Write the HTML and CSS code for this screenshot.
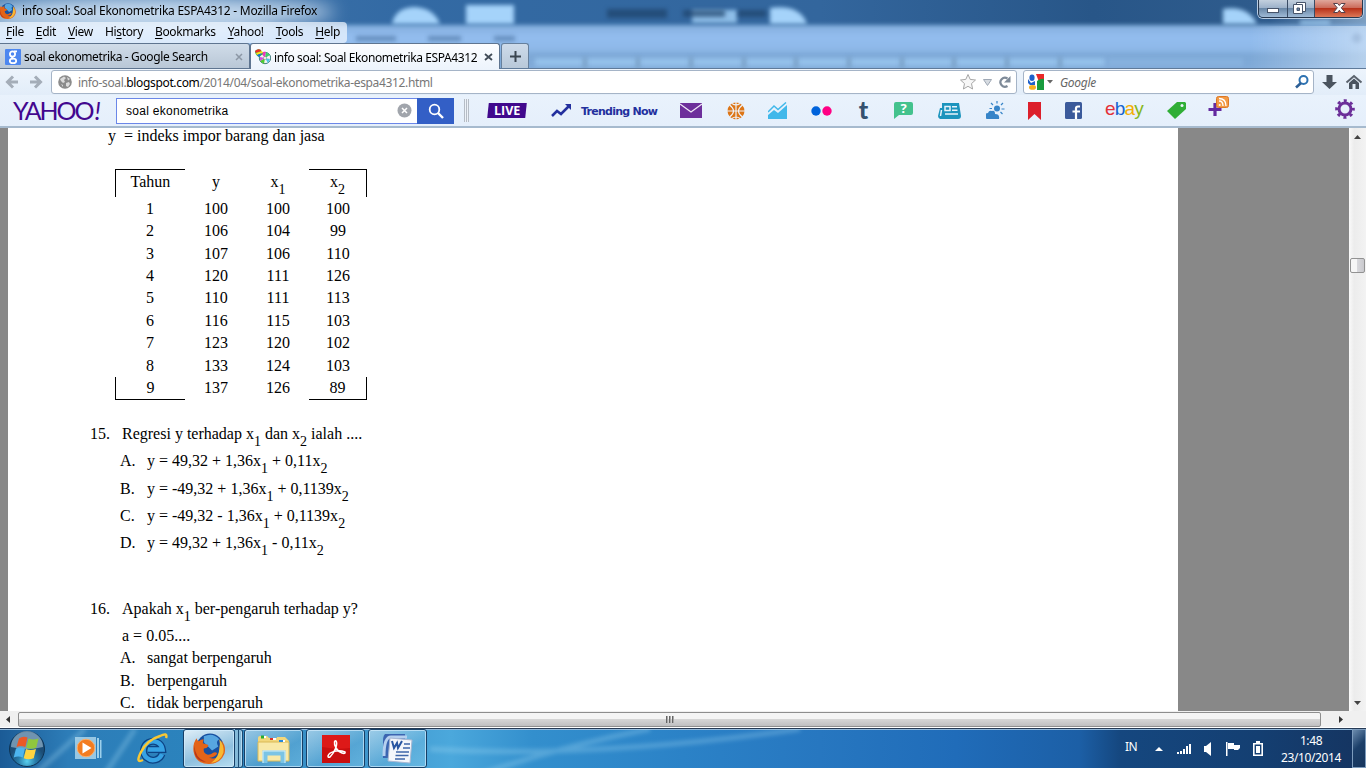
FILE: index.html
```html
<!DOCTYPE html>
<html lang="id">
<head>
<meta charset="utf-8">
<title>info soal: Soal Ekonometrika ESPA4312 - Mozilla Firefox</title>
<link rel="stylesheet" href="styles.css">
</head>
<body>
<header class="glass">
  <svg class="aero" width="1366" height="69" viewBox="0 0 1366 69" preserveAspectRatio="none">
    <defs>
      <linearGradient id="top"><stop offset="0" stop-color="#4378ad"/><stop offset=".3" stop-color="#336aa4"/><stop offset=".6" stop-color="#33669d"/><stop offset=".8" stop-color="#285688"/><stop offset=".93" stop-color="#2f5c8d"/><stop offset="1" stop-color="#7d9fc2"/></linearGradient>
      <linearGradient id="mid" x2="0" y2="1"><stop offset="0" stop-color="#84aedd"/><stop offset=".2" stop-color="#93bdef"/><stop offset=".4" stop-color="#8eb9e9"/><stop offset=".5" stop-color="#7da8d6"/><stop offset="1" stop-color="#86b0de"/></linearGradient>
      <linearGradient id="haze"><stop offset="0" stop-color="#d5e6f8" stop-opacity="0"/><stop offset="1" stop-color="#d5e6f8" stop-opacity=".65"/></linearGradient>
    </defs>
    <rect width="1366" height="30" fill="url(#top)"/>
    <rect class="soft" x="-20" y="25" width="1410" height="60" fill="url(#mid)"/>
    <g class="soft" fill="#a5d3fa">
      <path d="M392 24q3-16 22-17q20 1 26 17z"/><path d="M466 5h48v19h-48z"/><path d="M770 8q30-4 37 16h-37z"/><path d="M692 10h45v13h-45z" opacity=".8"/><path d="M1223 9q25-4 34 15h-34z"/>
      <path d="M1300 20h30v5h-30z" opacity=".7"/>
      <path d="M535 58h570v8H535z" opacity=".55"/>
      <path d="M1108 58h135v8h-135z" opacity=".2"/>
    </g>
    <g class="soft">
      <path fill="#7196bd" opacity=".8" d="M583 57h4v11h-4zM636 57h4v11h-4zM689 57h4v11h-4zM742 57h4v11h-4zM794 57h4v11h-4zM847 57h4v11h-4zM900 57h4v11h-4zM952 57h4v11h-4zM1005 57h4v11h-4zM1058 57h4v11h-4z"/>
      <path fill="#476f9f" opacity=".6" d="M356 36h40v5h-40zM428 36h33v5h-33zM494 36h21v5h-21z"/>
      <path fill="#1e436b" opacity=".7" d="M607 9h60v9h-60zM683 10h42v7h-42zM738 10h28v7h-28z"/>
      <circle cx="1357" cy="38" r="5" fill="#5c86bb"/>
    </g>
    <g class="glow" fill="#e8f4ff"><ellipse cx="160" cy="12" rx="175" ry="15" opacity=".8"/><ellipse cx="60" cy="32" rx="220" ry="14" opacity=".4"/></g>
    <rect x="1250" y="26" width="116" height="43" fill="url(#haze)"/>
  </svg>
  <div class="titlebar">
    <svg class="fx16" width="17" height="18" viewBox="0 0 32 32"><use href="#firefox"/></svg>
    <span class="win-title">info soal: Soal Ekonometrika ESPA4312 - Mozilla Firefox</span>
    <div class="winbtns">
      <span class="wb min"><svg width="28" height="18"><rect x="8.500" y="8.500" width="11" height="4" fill="#fff" stroke="#47546a"/></svg></span>
      <span class="wb max"><svg width="26" height="18" fill="#fff" stroke="#47546a"><path d="M8.500 2.500h9v9h-9z"/><path d="M5.500 4.500h9v9h-9z"/><path d="M9 8h2.500v2.500H9z" fill="#6c87a9"/></svg></span>
      <span class="wb close"><svg width="47" height="18"><path d="M18.500 3.500h4l1.800 2 1.800-2h4l-3.800 4.300 3.800 4.700h-4l-1.800-2.200-1.800 2.200h-4l3.800-4.700z" fill="#fff" stroke="#54414b"/></svg></span>
    </div>
  </div>
  <nav class="menubar"><span><u>F</u>ile</span><span><u>E</u>dit</span><span><u>V</u>iew</span><span>Hi<u>s</u>tory</span><span><u>B</u>ookmarks</span><span><u>Y</u>ahoo!</span><span><u>T</u>ools</span><span><u>H</u>elp</span></nav>
  <div class="tabs">
    <div class="tab">
      <svg width="16" height="16"><rect width="16" height="16" rx="1" fill="#4d87f0"/><g fill="none" stroke="#fff" stroke-width="1.800"><circle cx="7.500" cy="5" r="2.600"/><path d="M9 2.400h3M8 7.500q-2 1.500 0 2.200"/><ellipse cx="8" cy="11.900" rx="3.200" ry="2.200"/></g></svg>
      <span class="t1">soal ekonometrika - Google Search</span>
      <svg class="x" width="8" height="8"><path d="M1 1l6 6M7 1L1 7" stroke="#8c97a5" stroke-width="1.500"/></svg>
    </div>
    <div class="tab on">
      <svg width="16" height="16"><circle cx="10" cy="9" r="5.700" fill="#f2f2f2" stroke="#447f80"/><path d="M10 9L6 4a6 6 0 0 1 5-1z" fill="#ed38be"/><path d="M10 9l1-6 4 3z" fill="#3bd16a"/><path d="M10 9l5 1-2 4z" fill="#4bc6e6"/><path d="M10 9l-1 6-4-3z" fill="#4fca2e"/><path d="M10 9l-5 3V8z" fill="#d14fe0"/><path d="M0 2q3-3 6-1l2 4-4 3q-4-2-4-6z" fill="#2fb44a"/><path d="M0 2q3-3 6-1l0 1-5 2z" fill="#ed2f25"/><path d="M1 4l6-2 1 2-6 2z" fill="#fbe21c"/><path d="M2 6l5-2-3 4z" fill="#1970e0"/><circle cx="10" cy="9" r="1.500" fill="#fff" stroke="#777" stroke-width=".5"/></svg>
      <span class="t2">info soal: Soal Ekonometrika ESPA4312</span>
      <svg class="x" width="9" height="8"><path d="M1 1l7 6M8 1L1 7" stroke="#414b57" stroke-width="1.800"/></svg>
    </div>
    <div class="newtab"><svg width="11" height="11"><path d="M5.500 0v11M0 5.500h11" stroke="#3a4550" stroke-width="2"/></svg></div>
  </div>
</header>

<div class="navbar">
  <svg class="arrows" width="51" height="24" fill="none" stroke="#a4adb8" stroke-width="3"><path d="M18 12H9M13 6.500L7.500 12l5.500 5.500M30 12h9M35 6.500l5.500 5.500-5.500 5.500"/></svg>
  <div class="urlbar">
    <svg width="14" height="14"><circle cx="7" cy="7" r="6.800" fill="#8b8b8b"/><path d="M2 4l4-2.500 2 1.500-2 2 1 2-2 1-2-2zM8 8l3-1 1 2-2 3-2-1zM9 2l3 2-2 1.500zM3 9l2 1v2z" fill="#dcdcdc"/></svg>
    <span class="url">info-soal.<b>blogspot.com</b>/2014/04/soal-ekonometrika-espa4312.html</span>
    <svg class="urlicons" width="54" height="20"><path d="M9 2.500l2.200 4.900 5.300.6-4 3.600 1.100 5.400L9 14.300 4.400 17l1.100-5.400-4-3.600 5.300-.6z" fill="#f7f7f7" stroke="#a6a6a6"/><path d="M24.500 7.500h8l-4 6z" fill="#d6dbe1" stroke="#a0a9b5"/><path d="M48.500 14a4.500 4.500 0 1 1 0-7.500" fill="none" stroke="#7e8a98" stroke-width="2.200"/><path d="M51.500 4v6.500H45z" fill="#7e8a98"/></svg>
  </div>
  <div class="searchbar">
    <svg width="16" height="16"><path d="M8 0h8v7l-5 1z" fill="#ea2828"/><path d="M9 7q4-3 7-2v11H9z" fill="#189b3d"/><path d="M0 9l7 1v6H0z" fill="#fff"/><ellipse cx="4" cy="3.800" rx="2.600" ry="3.300" fill="#1e60ca"/><path d="M0 5l3 4 4-2v4H2L0 9z" fill="#1e60ca"/><ellipse cx="4.500" cy="13.400" rx="3.500" ry="2.300" fill="#f4b021"/></svg>
    <svg class="caret" width="6" height="4"><path d="M0 0h6L3 3.500z" fill="#666"/></svg>
    <i>Google</i>
    <svg class="mag" width="14" height="14"><circle cx="8.500" cy="5" r="4" fill="none" stroke="#2d72b1" stroke-width="2"/><path d="M6 8l-5 4.500" stroke="#2d5f96" stroke-width="2.600"/></svg>
  </div>
  <svg class="navicons" width="52" height="24"><path d="M12.500 5h6v7h4.500L15.500 19 8 12h4.500z" fill="#4b545f"/><path d="M32.500 12.500L40 6l7.500 6.500" fill="none" stroke="#5b636d" stroke-width="2"/><path d="M35 13l5-4.500 5 4.500v6h-3.500V14h-3v5H35z" fill="#4b545f"/></svg>
</div>

<div class="yahoobar">
  <span class="ylogo">YAHOO<em>!</em></span>
  <div class="ysearch"><span>soal ekonometrika</span><svg width="15" height="15"><circle cx="7.500" cy="7.500" r="7" fill="#a1a5ac"/><path d="M5 5l5 5M10 5l-5 5" stroke="#fff" stroke-width="1.500"/></svg></div>
  <div class="ybtn"><svg width="16" height="16"><circle cx="6.500" cy="6.500" r="4.800" fill="none" stroke="#fff" stroke-width="1.800"/><path d="M10 10l5 5" stroke="#fff" stroke-width="2.400"/></svg></div>
  <div class="grip"></div>
  <div class="live"><span>LIVE</span></div>
  <svg class="ic-trend" width="21" height="15"><path d="M1 13l5-5 4 3 8-8" fill="none" stroke="#23309e" stroke-width="2.500"/><path d="M14 1h6v6z" fill="#23309e"/></svg>
  <b class="trend">Trending Now</b>
  <svg class="ic-mail" width="22" height="15"><path d="M0 0h22v15H0z" fill="#6d2f9b"/><path d="M0 1l11 8 11-8" fill="none" stroke="#f2eaf8" stroke-width="1.200"/></svg>
  <svg class="ic-ball" width="18" height="18"><circle cx="9" cy="9" r="8.500" fill="#dd7516"/><path d="M0 9h18M9 0v18M2.500 3q4 3 4 6t-4 6M15.500 3q-4 3-4 6t4 6M5 1.500q4 3 8 0M5 16.500q4-3 8 0" fill="none" stroke="#edf4fc" stroke-width="1.200"/></svg>
  <svg class="ic-chart" width="20" height="17"><path d="M0 17v-4l6-5 4 3 9-8v14z" fill="#41b8ea"/><path d="M0 10l6-6 4 3.500 8-7" fill="none" stroke="#41b8ea" stroke-width="1.500"/></svg>
  <svg class="ic-flickr" width="22" height="10"><circle cx="5" cy="5" r="4.700" fill="#0063db"/><circle cx="16" cy="5" r="4.700" fill="#ff0084"/></svg>
  <b class="ic-t">t</b>
  <div class="ic-q"><svg width="19" height="17"><path d="M2 0h15q2 0 2 2v9q0 2-2 2H5l-5 4V2q0-2 2-2z" fill="#43c28d"/></svg><b>?</b></div>
  <svg class="ic-news" width="24" height="16"><path d="M4 0h17l2 13q0 3-3 3H2q-2-1-2-3l2-8h2z" fill="#1c94bd"/><path d="M7 3.500h5v4H7zM14 3.700h5M14 7.300h5.500M7 11h13M3.500 7l-1 6" fill="none" stroke="#e9f3fb" stroke-width="1.500"/></svg>
  <svg class="ic-weather" width="19" height="19"><path d="M2 18a3 3 0 0 1 0-6q1-3 4-2 3-1 3 3 5 0 4 5z" fill="#3684c8"/><circle cx="11" cy="7.500" r="3" fill="#3684c8"/><path d="M11 0v2.500M5 2l2 2M17 2l-2 2M15.500 8H18.500M14.500 11l2 2M3.500 7.500H6" stroke="#3684c8" stroke-width="1.200"/></svg>
  <svg class="ic-book" width="13" height="18"><path d="M0 0h13v18l-6.500-6L0 18z" fill="#dc1f2b"/></svg>
  <svg class="ic-fb" width="17" height="17"><rect width="17" height="17" rx="1.500" fill="#3b5a9b"/><path d="M15 4.500h-2q-2 0-2 2V17M7.500 9.500H15" fill="none" stroke="#fff" stroke-width="2.200"/></svg>
  <span class="ebay"><i class="e">e</i><i class="b">b</i><i class="a">a</i><i class="y">y</i></span>
  <svg class="ic-tag" width="19" height="17"><path d="M10 0h8l1 1v6L8 17 0 9z" fill="#30ae36"/><circle cx="15" cy="3.500" r="1.500" fill="#eaf4fa"/></svg>
  <svg class="ic-plus" width="21" height="21"><path d="M7 7v13M.5 13.500h13" stroke="#632aa0" stroke-width="3.200"/><rect x="8.500" y=".5" width="12" height="11" rx="2" fill="#f39a45" stroke="#dd7825"/><path d="M11 5q4 0 4 5M11 2.500q7 0 7 7.500" fill="none" stroke="#fff" stroke-width="1.300"/><circle cx="11.700" cy="9" r="1" fill="#fff"/></svg>
  <svg class="ic-gear" width="20" height="20"><circle cx="10" cy="10" r="8.300" fill="none" stroke="#6c2f99" stroke-width="3" stroke-dasharray="3 3.520" stroke-dashoffset="1.500"/><circle cx="10" cy="10" r="6" fill="none" stroke="#6c2f99" stroke-width="3"/></svg>
</div>

<main class="viewport">
  <article class="doc">
    <p class="intro">y&nbsp; = indeks impor barang dan jasa</p>
    <div class="tbl">
      <div class="row head"><span>Tahun</span><span>y</span><span>x<sub>1</sub></span><span>x<sub>2</sub></span></div>
      <div class="row"><span>1</span><span>100</span><span>100</span><span>100</span></div>
      <div class="row"><span>2</span><span>106</span><span>104</span><span>99</span></div>
      <div class="row"><span>3</span><span>107</span><span>106</span><span>110</span></div>
      <div class="row"><span>4</span><span>120</span><span>111</span><span>126</span></div>
      <div class="row"><span>5</span><span>110</span><span>111</span><span>113</span></div>
      <div class="row"><span>6</span><span>116</span><span>115</span><span>103</span></div>
      <div class="row"><span>7</span><span>123</span><span>120</span><span>102</span></div>
      <div class="row"><span>8</span><span>133</span><span>124</span><span>103</span></div>
      <div class="row foot"><span>9</span><span>137</span><span>126</span><span>89</span></div>
    </div>
    <section class="q q15">
      <p class="sub"><span class="n">15.</span>Regresi y terhadap x<sub>1</sub> dan x<sub>2</sub> ialah ....</p>
      <p class="sub o"><span>A.</span>y = 49,32 + 1,36x<sub>1</sub> + 0,11x<sub>2</sub></p>
      <p class="sub o"><span>B.</span>y = -49,32 + 1,36x<sub>1</sub> + 0,1139x<sub>2</sub></p>
      <p class="sub o"><span>C.</span>y = -49,32 - 1,36x<sub>1</sub> + 0,1139x<sub>2</sub></p>
      <p class="sub o"><span>D.</span>y = 49,32 + 1,36x<sub>1</sub> - 0,11x<sub>2</sub></p>
    </section>
    <section class="q q16">
      <p class="sub"><span class="n">16.</span>Apakah x<sub>1</sub> ber-pengaruh terhadap y?</p>
      <p class="alpha">a = 0.05....</p>
      <p class="o"><span>A.</span>sangat berpengaruh</p>
      <p class="o"><span>B.</span>berpengaruh</p>
      <p class="o"><span>C.</span>tidak berpengaruh</p>
    </section>
  </article>
  <div class="vscroll">
    <svg width="7" height="4"><path d="M3.500 0L7 4H0z" fill="#444"/></svg>
    <div class="vthumb"></div>
    <svg class="down" width="7" height="4"><path d="M0 0h7L3.500 4z" fill="#444"/></svg>
  </div>
</main>
<div class="hscroll">
  <svg width="4" height="7"><path d="M4 0v7L0 3.500z" fill="#333"/></svg>
  <div class="hthumb"><i></i><i></i><i></i></div>
  <svg class="right" width="4" height="7"><path d="M0 0v7l4-3.500z" fill="#333"/></svg>
</div>

<footer class="taskbar">
  <svg class="streaks" width="1366" height="40"><g class="soft" fill="none" stroke="#a8dcf4" stroke-width="5" opacity=".3"><path d="M35 45L85 0M105 45L135 0M480 45Q570 15 650 0M430 20Q590 30 800 0"/></g></svg>
  <svg class="orb" width="38" height="38" viewBox="0 0 38 38"><defs><radialGradient id="o" cy=".85"><stop offset="0" stop-color="#59d0ee"/><stop offset=".5" stop-color="#277ba9"/><stop offset="1" stop-color="#1c4d76"/></radialGradient></defs><circle cx="19" cy="19" r="17.500" fill="url(#o)" stroke="#0d3354"/><path d="M3 17a16 16 0 0 1 32 0q-16 4-32 0z" fill="#c3dbe9" opacity=".5"/><path d="M11 8.500q4-3 8.500-1l-2.200 9.500q-4.500-2-8.800 0z" fill="#ea5927"/><path d="M20.500 8.500q4.500 2 10 0l-2.300 9.300q-5.200 2-10 0z" fill="#8fc73e"/><path d="M8 18.500q4.500-2 9 0l-2.300 9q-4.300-2-9 0z" fill="#4db5ef"/><path d="M18 19q4.500 2 10 0l-2.300 9.300q-5.200 2-10 0z" fill="#fed440"/></svg>
  <svg class="wmp" width="28" height="26"><path d="M0 1h21v22H0z" fill="#b2daee" opacity=".8"/><path d="M22 2h2v20h-2zM25 4h1.500v18H25z" fill="#9dd0eb"/><circle cx="11" cy="12" r="8.800" fill="#f37c20" stroke="#f9ae6c"/><path d="M7.500 6.500v11l9-5.500z" fill="#fff"/></svg>
  <svg class="ie" width="32" height="32" viewBox="0 0 32 32"><path d="M26 21A9.500 9.500 0 1 1 26.500 16.500H12" fill="none" stroke="#0d4384" stroke-width="7"/><path d="M26 21A9.500 9.500 0 1 1 26.500 16.500H12" fill="none" stroke="#36a2e4" stroke-width="4.500"/><path d="M7 27Q-1 31 5 19T24 3q8-4 6 2" fill="none" stroke="#f9c834" stroke-width="2.500"/></svg>
  <div class="tb ff"><svg width="34" height="33" viewBox="0 0 32 32"><g id="firefox"><circle cx="17" cy="14.500" r="13" fill="#174f9f"/><path d="M11 4q9-4 15 3-4 2-1 7l-6 4-8-8z" fill="#57a6e0"/><path d="M4 6q0 2 2 3 2-2 5-2-1 2-1 4l4 1q2 0 1 2-1 2-4 2-1 5 4 6 3 0 5-2 3-1 4 1-3 4-8 4 5 2 9-1 5-4 4-12l-1-4q5 6 3 13-4 10-15 10Q3 31 1 19 0 11 4 6z" fill="#e36418"/><path d="M26 7q5 5 4 13-3 9-12 10 8-6 8-14 1-5 0-9z" fill="#f9b932"/><path d="M2 13q0 12 11 16-13-1-11-16z" fill="#b7371a"/></g></svg></div><div class="stack"></div>
  <div class="tb ex"><svg width="34" height="30"><path d="M1 4q0-2 2-2h7l2 2h8v-1h8l4 4v18H1z" fill="#f2d77b"/><path d="M1 8h31v19H1z" fill="#f8e9a8" stroke="#d9b956"/><path d="M4 3h5M14 5h5M23 7h5" stroke="#fff" stroke-width="2"/><path d="M4 3h3" stroke="#27ad31" stroke-width="3"/><path d="M13 5h3" stroke="#de3426" stroke-width="2"/><path d="M22 7h4" stroke="#2587d9" stroke-width="2"/><path d="M8 29V19h18v10" fill="none" stroke="#7bc4e5" stroke-width="5"/><path d="M6 29V17h22v12" fill="none" stroke="#d3effa"/></svg></div>
  <div class="tb ad"><svg width="28" height="28"><path d="M0 0h28v28H0z" fill="#c90e0f"/><path d="M0 0h28v13q-13 2-28-1z" fill="#dd1918"/><path d="M6 21c1-4 10-7 17-4 1 3-6 1-9-4-3-6-1-8 0-7 2 3-1 11-6 16q-2 1-2-1z" fill="none" stroke="#fff" stroke-width="1.500"/></svg></div>
  <div class="tb wd"><svg width="32" height="30"><path d="M3 0h20v24H1V7q0-5 2-7z" fill="#3b65b1"/><path d="M2 22Q2 3 9 3h16" fill="none" stroke="#b6d0ef" stroke-width="3"/><path d="M8 4l22 2-2 23-22-2z" fill="#f3f6fb" stroke="#a9b8d3"/><path d="M22 10h6M21 14h7M14 18h13M13.500 21.500h13M13 25h10" stroke="#3e66a9" stroke-width="1.700"/><path d="M10 7l2 7 3-5 1 5 4-7" fill="none" stroke="#2855a1" stroke-width="2"/></svg></div>
  <div class="tray">
    <span class="in">IN</span>
    <svg class="up" width="8" height="4"><path d="M0 4l4-4 4 4z" fill="#fff"/></svg>
    <svg class="sig" width="15" height="12" fill="#fff"><path d="M0 9h2v2H0zM3 8h2v3H3zM6 6h2v5H6zM9 3h2v8H9zM12 1h2v10h-2z"/></svg>
    <svg class="spk" width="8" height="14"><path d="M0 4h2l5-4v14l-5-4H0z" fill="#fff"/></svg>
    <svg class="flag" width="15" height="14"><path d="M0 0h1.500v14H0zM2 1h6v2h6v3l-2 2H8V7H2z" fill="#fff"/></svg>
    <svg class="bat" width="10" height="15"><path d="M3 0h4v2H3z" fill="#fff"/><path d="M.8 2.800h8.400v11.400H.8z" fill="none" stroke="#fff" stroke-width="1.600"/><path d="M3 5h4v7H3z" fill="#fff"/></svg>
    <div class="clock"><span>1:48</span><span>23/10/2014</span></div>
    <div class="desk"></div>
  </div>
</footer>
</body>
</html>
```
FILE: styles.css
```css
* { box-sizing: border-box; }
body { margin: 0; width: 1366px; height: 768px; overflow: hidden; display: flex; flex-direction: column; font: 12px "Noto Sans", "Open Sans", sans-serif; color: #000; }
svg { display: block; flex: none; }
span, b { white-space: nowrap; }
p { margin: 0; }
.soft { filter: blur(2.2px); }
.glow { filter: blur(9px); }

/* window frame */
.glass { position: relative; z-index: 0; height: 69px; flex: none; background: #4f82b8; }
.aero { position: absolute; left: 0; top: 0; z-index: -1; }
.titlebar { height: 22px; display: flex; align-items: center; }
.fx16 { margin-left: -1px; margin-top: -1px; }
.win-title { margin-left: 6px; letter-spacing: -0.250px; line-height: 22px; }
.winbtns { margin: 0 3px 0 auto; height: 18px; align-self: flex-start; display: flex; border: 1px solid #27384f; border-top: 0; border-radius: 0 0 5px 5px; overflow: hidden; box-shadow: 0 0 0 1px #b9cde4; }
.wb { background: linear-gradient(#c3d0de, #9db2ca 45%, #6a88a8 50%, #9fbad6); border-right: 1px solid #394c65; }
.wb.close { background: linear-gradient(#e0a79b, #cc6c5b 45%, #b8321a 50%, #dc7858); border-right: 0; }
.menubar { height: 21px; width: 347px; display: flex; padding-left: 6px; gap: 12px; line-height: 20px; letter-spacing: -0.340px; background: rgba(240, 247, 255, .72); border-radius: 0 4px 4px 0; white-space: nowrap; }
.menubar u { text-underline-offset: 2px; }
.tabs { height: 26px; display: flex; border-bottom: 1px solid #5f7a99; }
.tab { width: 250px; height: 26px; padding: 1px 6px 0 5px; display: flex; align-items: center; background: linear-gradient(#d0dce9, #b9c7d6); border: 1px solid #5f7590; border-left: 0; border-radius: 0 3px 0 0; letter-spacing: -0.380px; }
.tab.on { background: linear-gradient(#fcfdff, #edf4fc); border-bottom: 0; border-left: 1px solid #5f7590; border-radius: 3px 3px 0 0; padding-left: 4px; letter-spacing: -0.390px; }
.tab span { margin-left: 3px; }
.tab .x { margin-left: auto; }
.newtab { width: 28px; margin-left: 1px; display: flex; align-items: center; justify-content: center; background: linear-gradient(#cddbea, #b8c8d9); border: 1px solid #66809d; border-bottom: 0; border-radius: 3px 3px 0 0; }

/* navigation toolbar */
.navbar { height: 26px; flex: none; display: flex; align-items: flex-start; background: linear-gradient(#edf4fc, #e2edf9); padding-top: 1px; }
.urlbar { width: 966px; height: 24px; display: flex; align-items: center; padding: 0 3px 0 6px; background: #fff; border: 1px solid #a5b4c7; border-radius: 3px; color: #777; }
.url { margin-left: 6px; letter-spacing: -0.350px; }
.url b { font-weight: 400; color: #000; }
.urlicons { margin-left: auto; }
.searchbar { width: 291px; height: 24px; margin-left: 6px; display: flex; align-items: center; padding: 0 4px 0 4px; background: #fff; border: 1px solid #a5b4c7; border-radius: 3px; color: #666; letter-spacing: -.3px; }
.caret { margin: 0 7px 0 3px; }
.mag { margin-left: auto; }

/* Yahoo toolbar */
.yahoobar { height: 33px; flex: none; display: flex; align-items: center; background: linear-gradient(#e9f2fc, #e5effb); border-bottom: 2px solid #a6bace; }
.ylogo { width: 90px; margin-left: 13px; margin-top: -1px; font: 25px/30px "Lato", sans-serif; letter-spacing: -2.100px; color: #43078f; }
.ylogo em { margin-left: 2px; }
.ysearch { width: 301px; height: 26px; margin-left: 13px; padding: 0 5px 0 9px; display: flex; justify-content: space-between; align-items: center; border: 1px solid #6b87e8; border-right: 0; background: #fff; font: 12px "Liberation Sans", sans-serif; letter-spacing: .3px; }
.ybtn { width: 37px; height: 26px; display: flex; align-items: center; justify-content: center; background: #335fc6; }
.grip { width: 5px; height: 23px; margin-left: 10px; background: repeating-linear-gradient(90deg, #b5bcc5 0 1px, #edf2f8 1px 2px); }
.live { width: 38px; height: 15px; margin: -1px 0 0 19px; display: flex; justify-content: center; background: #41098d; transform: skewX(-6deg); font: bold 12.500px/15px "Open Sans", sans-serif; color: #fff; }
.live span { transform: skewX(6deg); }
.ic-trend { margin-left: 25px; }
.trend { width: 77px; margin: 2px 0 0 9px; font: bold 11px "DejaVu Sans", sans-serif; letter-spacing: -.750px; color: #23309e; }
.ic-mail { margin-left: 22px; }
.ic-ball { margin-left: 25px; }
.ic-chart { margin-left: 23px; }
.ic-flickr { margin-left: 23px; }
.ic-t { width: 13px; margin: -3px 0 0 24px; font: 900 25px/25px "Lato", sans-serif; color: #35516f; text-align: center; }
.ic-q { display: grid; margin-left: 24px; }
.ic-q > * { grid-area: 1 / 1; }
.ic-q b { text-align: center; line-height: 13px; color: #fff; font-size: 13px; }
.ic-news { margin-left: 25px; }
.ic-weather { margin-left: 24px; margin-top: -1px; }
.ic-book { margin-left: 23px; }
.ic-fb { margin-left: 24px; }
.ebay { width: 39px; margin: -4px 0 0 23px; font: 19px/22px "Liberation Sans", sans-serif; letter-spacing: -.8px; }
.ebay i { font-style: normal; }
.ebay .e { color: #e43137; } .ebay .b { color: #1665d0; } .ebay .a { color: #f4ae02; } .ebay .y { color: #85b71b; }
.ic-tag { margin-left: 23px; }
.ic-plus { margin-left: 22px; margin-top: -9px; }
.ic-gear { margin-left: auto; margin-right: 11px; margin-top: -3px; }

/* page */
.viewport { height: 583px; flex: none; display: flex; background: #888; }
.doc { width: 1170px; margin-left: 8px; background: #fff; overflow: hidden; font: 16px/22.4px "Liberation Serif", serif; }
.doc sub { font-size: 14px; line-height: 0; vertical-align: -7px; }
.intro { margin: -3px 0 0 100px; }
.tbl { width: 252px; margin: 22px 0 0 107px; }
.row { display: grid; grid-template-columns: 70px 62px 62px 58px; height: 22.4px; text-align: center; }
.row.head { height: 28px; margin-bottom: .5px; }
.row.head span:first-child, .row.head span:last-child { border-top: 1px solid #000; }
.row.head span { padding-top: 1px; border-top: 1px solid transparent; }
.row.foot span:first-child, .row.foot span:last-child { border-bottom: 1px solid #000; }
.head span:first-child, .foot span:first-child { border-left: 1px solid #000; }
.head span:last-child, .foot span:last-child { border-right: 1px solid #000; }
.row.foot { height: 23px; }
.q p { height: 22.4px; padding-left: 114px; }
.q p.sub { height: 27.3px; }
.q .n { display: inline-block; width: 32px; margin-left: -32px; }
.q p.o { padding-left: 139px; }
.q .o span { display: inline-block; width: 27px; margin-left: -27px; }
.q15 { margin-top: 23px; }
.q16 { margin-top: 38px; }
.vscroll { width: 17px; margin-left: auto; display: flex; flex-direction: column; align-items: center; padding: 7px 0 6px; background: linear-gradient(90deg, #fafafa, #ececec 30%, #f3f3f3); }
.vthumb { width: 15px; height: 15px; margin-top: 119px; background: linear-gradient(90deg, #f6f6f6 45%, #d8d8dc 50%, #c9c9cd); border: 1px solid #929292; border-radius: 2px; }
.down { margin-top: auto; }
.hscroll { height: 17px; flex: none; display: flex; align-items: center; padding: 0 23px 0 6px; background: #f0f0f0; border-bottom: 1px solid #fff; }
.hthumb { width: 1303px; height: 15px; margin-left: 8px; display: flex; justify-content: center; align-items: center; gap: 1px; border: 1px solid #8e8e8e; border-radius: 2px; background: linear-gradient(#f5f5f5 45%, #d5d5d5 50%, #bfbfc1); }
.hthumb i { width: 2px; height: 7px; background: linear-gradient(90deg, #444, #ccc); }
.right { margin-left: auto; }

/* taskbar */
.taskbar { position: relative; z-index: 0; height: 40px; flex: none; display: flex; align-items: center; border-top: 1px solid #253a55; box-shadow: inset 0 1px #91b8da; background: linear-gradient(90deg, #1b5b96, #2d7db8 5%, #2b83bd 14%, #3f97cd 27%, #4ba8dc 33%, #338fcd 39%, #2b82c7 50%, #2777c0 60%, #206cb9 70%, #1c5fa6 79%, #15477f 82%, #143f72 92%, #153460); }
.streaks { position: absolute; left: 0; top: 0; z-index: -1; }
.orb { margin-left: 8px; }
.wmp { margin-left: 29px; }
.ie { margin-left: 33px; }
.tb { width: 59px; height: 39px; display: flex; align-items: center; justify-content: center; border: 1px solid #173f66; border-radius: 3px; box-shadow: inset 0 0 0 1px rgba(215, 239, 255, .65); background: linear-gradient(150deg, rgba(220, 240, 250, .6), rgba(130, 195, 228, .35) 60%, rgba(140, 210, 240, .45)); }
.ff { width: 52px; margin-left: 15px; background: linear-gradient(160deg, #e0eff8, #8fc0df 60%, #b7def1); }
.stack { width: 8px; height: 39px; border: 1px solid #1b4a73; border-left: 0; box-shadow: inset -1px 0 #b6dcf1; background: linear-gradient(90deg, #84bad9 3px, #1b4a73 3px 4px, #84bad9 4px); border-radius: 0 3px 3px 0; }
.ex { margin-left: 1px; }
.ad, .wd { margin-left: 3px; }
.tray { margin-left: auto; height: 39px; display: flex; align-items: center; color: #fff; }
.in { width: 13px; font-size: 12px; letter-spacing: -.5px; margin-top: -5px; }
.up { margin-left: 17px; }
.sig { margin-left: 14px; }
.spk { margin-left: 12px; }
.flag { margin-left: 14px; }
.bat { margin-left: 12px; }
.clock { width: 80px; margin-left: 8px; display: flex; flex-direction: column; align-items: center; line-height: 17px; letter-spacing: -0.4px; }
.desk { width: 14px; height: 39px; margin-left: 1px; border: 1px solid #7d9cbd; background: linear-gradient(135deg, #6b8bad, #1c3f69 45%, #16355d); }
```
